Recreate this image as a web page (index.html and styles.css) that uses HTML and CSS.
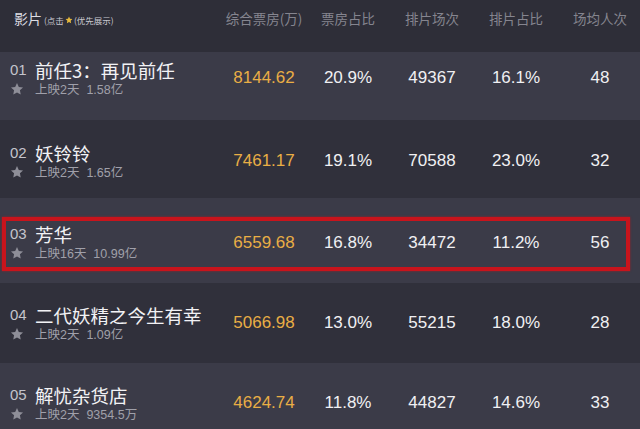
FILE: index.html
```html
<!DOCTYPE html>
<html lang="zh-CN">
<head>
<meta charset="utf-8">
<title>票房排行</title>
<link rel="stylesheet" href="styles.css">
</head>
<body>
<div class="board">
  <div class="head">
    <div class="film-col head-film">
      <span class="head-title">影片</span>
      <span class="head-note">(点击 <svg class="mini-star" viewBox="0 0 24 24"><path d="M12 1.8l3.1 6.6 7.2.9-5.3 5 1.4 7.1L12 17.9l-6.4 3.5 1.4-7.1-5.3-5 7.2-.9z"/></svg> (优先展示)</span>
    </div>
    <div class="cell head-cell">综合票房(万)</div>
    <div class="cell head-cell">票房占比</div>
    <div class="cell head-cell">排片场次</div>
    <div class="cell head-cell">排片占比</div>
    <div class="cell head-cell">场均人次</div>
  </div>

  <div class="row light first">
    <div class="film-col film">
      <div class="rank"><span class="num">01</span><svg class="star" viewBox="0 0 24 24"><path d="M12 1.8l3.1 6.6 7.2.9-5.3 5 1.4 7.1L12 17.9l-6.4 3.5 1.4-7.1-5.3-5 7.2-.9z"/></svg></div>
      <div class="info"><div class="name">前任3：再见前任</div><div class="sub">上映2天&nbsp; 1.58亿</div></div>
    </div>
    <div class="cell gold">8144.62</div>
    <div class="cell">20.9%</div>
    <div class="cell">49367</div>
    <div class="cell">16.1%</div>
    <div class="cell">48</div>
  </div>

  <div class="row dark second">
    <div class="film-col film">
      <div class="rank"><span class="num">02</span><svg class="star" viewBox="0 0 24 24"><path d="M12 1.8l3.1 6.6 7.2.9-5.3 5 1.4 7.1L12 17.9l-6.4 3.5 1.4-7.1-5.3-5 7.2-.9z"/></svg></div>
      <div class="info"><div class="name">妖铃铃</div><div class="sub">上映2天&nbsp; 1.65亿</div></div>
    </div>
    <div class="cell gold">7461.17</div>
    <div class="cell">19.1%</div>
    <div class="cell">70588</div>
    <div class="cell">23.0%</div>
    <div class="cell">32</div>
  </div>

  <div class="row light third">
    <div class="film-col film">
      <div class="rank"><span class="num">03</span><svg class="star" viewBox="0 0 24 24"><path d="M12 1.8l3.1 6.6 7.2.9-5.3 5 1.4 7.1L12 17.9l-6.4 3.5 1.4-7.1-5.3-5 7.2-.9z"/></svg></div>
      <div class="info"><div class="name">芳华</div><div class="sub">上映16天&nbsp; 10.99亿</div></div>
    </div>
    <div class="cell gold">6559.68</div>
    <div class="cell">16.8%</div>
    <div class="cell">34472</div>
    <div class="cell">11.2%</div>
    <div class="cell">56</div>
    <div class="highlight"></div>
  </div>

  <div class="row dark">
    <div class="film-col film">
      <div class="rank"><span class="num">04</span><svg class="star" viewBox="0 0 24 24"><path d="M12 1.8l3.1 6.6 7.2.9-5.3 5 1.4 7.1L12 17.9l-6.4 3.5 1.4-7.1-5.3-5 7.2-.9z"/></svg></div>
      <div class="info"><div class="name">二代妖精之今生有幸</div><div class="sub">上映2天&nbsp; 1.09亿</div></div>
    </div>
    <div class="cell gold">5066.98</div>
    <div class="cell">13.0%</div>
    <div class="cell">55215</div>
    <div class="cell">18.0%</div>
    <div class="cell">28</div>
  </div>

  <div class="row light">
    <div class="film-col film">
      <div class="rank"><span class="num">05</span><svg class="star" viewBox="0 0 24 24"><path d="M12 1.8l3.1 6.6 7.2.9-5.3 5 1.4 7.1L12 17.9l-6.4 3.5 1.4-7.1-5.3-5 7.2-.9z"/></svg></div>
      <div class="info"><div class="name">解忧杂货店</div><div class="sub">上映2天&nbsp; 9354.5万</div></div>
    </div>
    <div class="cell gold">4624.74</div>
    <div class="cell">11.8%</div>
    <div class="cell">44827</div>
    <div class="cell">14.6%</div>
    <div class="cell">33</div>
  </div>
</div>
</body>
</html>
```

FILE: styles.css
```css
html, body {
  margin: 0;
  padding: 0;
  width: 640px;
  height: 429px;
  overflow: hidden;
  background: #2f2f3a;
}

.board {
  width: 640px;
  font-family: "Liberation Sans", "Noto Sans CJK SC", sans-serif;
}

.head {
  display: flex;
  height: 52px;
  background: #2e2e38;
  align-items: flex-start;
}

.film-col {
  width: 222px;
  flex: none;
  display: flex;
  box-sizing: border-box;
}

.head-film {
  padding: 9px 0 0 14px;
  align-items: center;
  height: 27px;
}

.head-title {
  font-family: "Noto Sans CJK SC", sans-serif;
  font-size: 14px;
  color: #dcdce2;
  line-height: 18px;
}

.head-note {
  font-family: "Noto Sans CJK SC", sans-serif;
  font-size: 8.5px;
  color: #c8c8d0;
  margin-left: 2px;
  margin-top: 3px;
  display: flex;
  align-items: center;
}

.mini-star {
  width: 8px;
  height: 8px;
  fill: #e6b83c;
  margin: 0 1px;
}

.cell {
  width: 84px;
  flex: none;
  text-align: center;
  font-size: 17px;
  color: #f0f0f3;
}

.head-cell {
  font-family: "Noto Sans CJK SC", sans-serif;
  font-size: 13.5px;
  color: #85858f;
  line-height: 18px;
  padding-top: 9px;
  white-space: nowrap;
}

.row {
  position: relative;
  display: flex;
  align-items: center;
  height: 80px;
  box-sizing: border-box;
}

.row.light { background: #3b3b48; }
.row.dark { background: #30303b; }

.row.first {
  height: 68px;
  padding-bottom: 16px;
}

.row.second { height: 78px; padding-top: 4px; }
.row.third { height: 85px; padding-top: 4px; }

.film {
  align-items: flex-start;
  padding-left: 10px;
}

.rank {
  width: 25px;
  flex: none;
  display: flex;
  flex-direction: column;
}

.num {
  font-size: 15px;
  line-height: 20px;
  color: #c4c4cc;
  margin-top: 2px;
}

.star {
  width: 14px;
  height: 14px;
  fill: #8e8e98;
  margin-top: 2px;
}

.info {
  display: flex;
  flex-direction: column;
}

.name {
  font-family: "Noto Sans CJK SC", sans-serif;
  font-size: 18.5px;
  line-height: 24px;
  color: #f2f2f5;
}

.sub {
  font-family: "Liberation Sans", "Noto Sans CJK SC", sans-serif;
  font-size: 12.5px;
  line-height: 17px;
  color: #a0a0aa;
}

.gold {
  color: #e9ae45;
}

.highlight {
  position: absolute;
  left: 2px;
  top: 19px;
  width: 628px;
  height: 54px;
  box-sizing: border-box;
  border: 4px solid #c8141c;
  box-shadow: 0 0 2px rgba(200, 20, 28, 0.7);
  pointer-events: none;
}
```
